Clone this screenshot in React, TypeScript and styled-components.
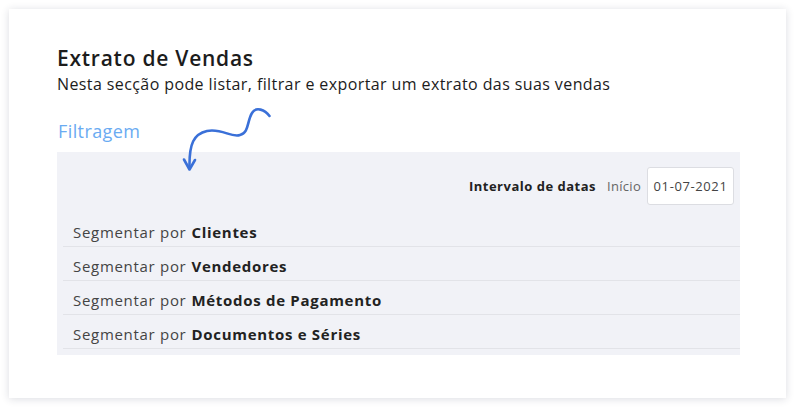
import React from "react";
import styled, { createGlobalStyle } from "styled-components";

const Global = createGlobalStyle`
  html, body { margin: 0; padding: 0; background: #ffffff; }
  body { font-family: "Open Sans", "Noto Sans", sans-serif; }
  * { box-sizing: border-box; }
`;

const Page = styled.div`
  width: 800px;
  height: 413px;
  padding: 9px 14px 15px 9px;
`;

const Card = styled.div`
  position: relative;
  width: 777px;
  height: 389px;
  background: #fff;
  box-shadow: 0 1px 8px rgba(30, 40, 70, 0.16);
  padding: 36px 46px 0 48px;
  display: flex;
  flex-direction: column;
`;

const Title = styled.h1`
  margin: 0;
  font-family: "Open Sans", sans-serif;
  font-weight: 600;
  font-size: 21px;
  letter-spacing: 0.75px;
  line-height: 26px;
  color: #1c1c1c;
`;

const Subtitle = styled.p`
  margin: 3px 0 0 0;
  font-size: 16px;
  letter-spacing: 0.4px;
  line-height: 20px;
  color: #1c1c1c;
`;

const Section = styled.h2`
  margin: 25px 0 0 1px;
  font-weight: 400;
  font-size: 18px;
  letter-spacing: 0.4px;
  line-height: 24px;
  color: #6aabf2;
`;

const Panel = styled.div`
  margin-top: 9px;
  width: 683px;
  background: #f1f2f7;
  padding: 15px 0 6px 6px;
  display: flex;
  flex-direction: column;
`;

const DateRow = styled.div`
  display: flex;
  justify-content: flex-end;
  align-items: center;
  gap: 11px;
  margin: 0 6px 8px 0;
`;

const DateLabel = styled.span`
  font-size: 13px;
  font-weight: 700;
  letter-spacing: 0.5px;
  color: #222;
`;

const DateSub = styled.span`
  font-size: 13px;
  letter-spacing: 0.3px;
  color: #666;
  margin-right: -5px;
`;

const DateInput = styled.div`
  width: 87px;
  height: 38px;
  background: #fff;
  border: 1px solid #dcdde2;
  border-radius: 3px;
  display: flex;
  align-items: center;
  justify-content: center;
  font-size: 13px;
  letter-spacing: 0.6px;
  color: #444;
`;

const Row = styled.div`
  height: 34px;
  border-bottom: 1px solid #e2e3e8;
  display: flex;
  align-items: center;
  padding: 4px 0 0 10px;
  font-size: 15px;
  letter-spacing: 0.7px;
  color: #444;
`;

const Strong = styled.b`
  font-weight: 700;
  color: #222;
  margin-left: 5px;
`;

const Squiggle = styled.svg`
  position: absolute;
  left: 161px;
  top: 87px;
`;

const rows = ["Clientes", "Vendedores", "Métodos de Pagamento", "Documentos e Séries"];

export default function App() {
  return (
    <>
      <Global />
      <Page>
        <Card>
          <Title>Extrato de Vendas</Title>
          <Subtitle>Nesta secção pode listar, filtrar e exportar um extrato das suas vendas</Subtitle>
          <Section>Filtragem</Section>
          <Panel>
            <DateRow>
              <DateLabel>Intervalo de datas</DateLabel>
              <DateSub>Início</DateSub>
              <DateInput>01-07-2021</DateInput>
            </DateRow>
            {rows.map((r) => (
              <Row key={r}>
                Segmentar por<Strong>{r}</Strong>
              </Row>
            ))}
          </Panel>
          <Squiggle width="110" height="80" viewBox="170 96 110 80">
            <path
              d="M269.5 116 C265 110 256 106 252 113 C247 121 249 133 240 135 C231 138 222 128 207 131 C194 134 189 143 189.5 168"
              fill="none"
              stroke="#3a70d8"
              strokeWidth="2.6"
              strokeLinecap="round"
            />
            <path
              d="M184 159.5 L189.5 169.5 L195 160"
              fill="none"
              stroke="#3a70d8"
              strokeWidth="2.6"
              strokeLinecap="round"
              strokeLinejoin="round"
            />
          </Squiggle>
        </Card>
      </Page>
    </>
  );
}
